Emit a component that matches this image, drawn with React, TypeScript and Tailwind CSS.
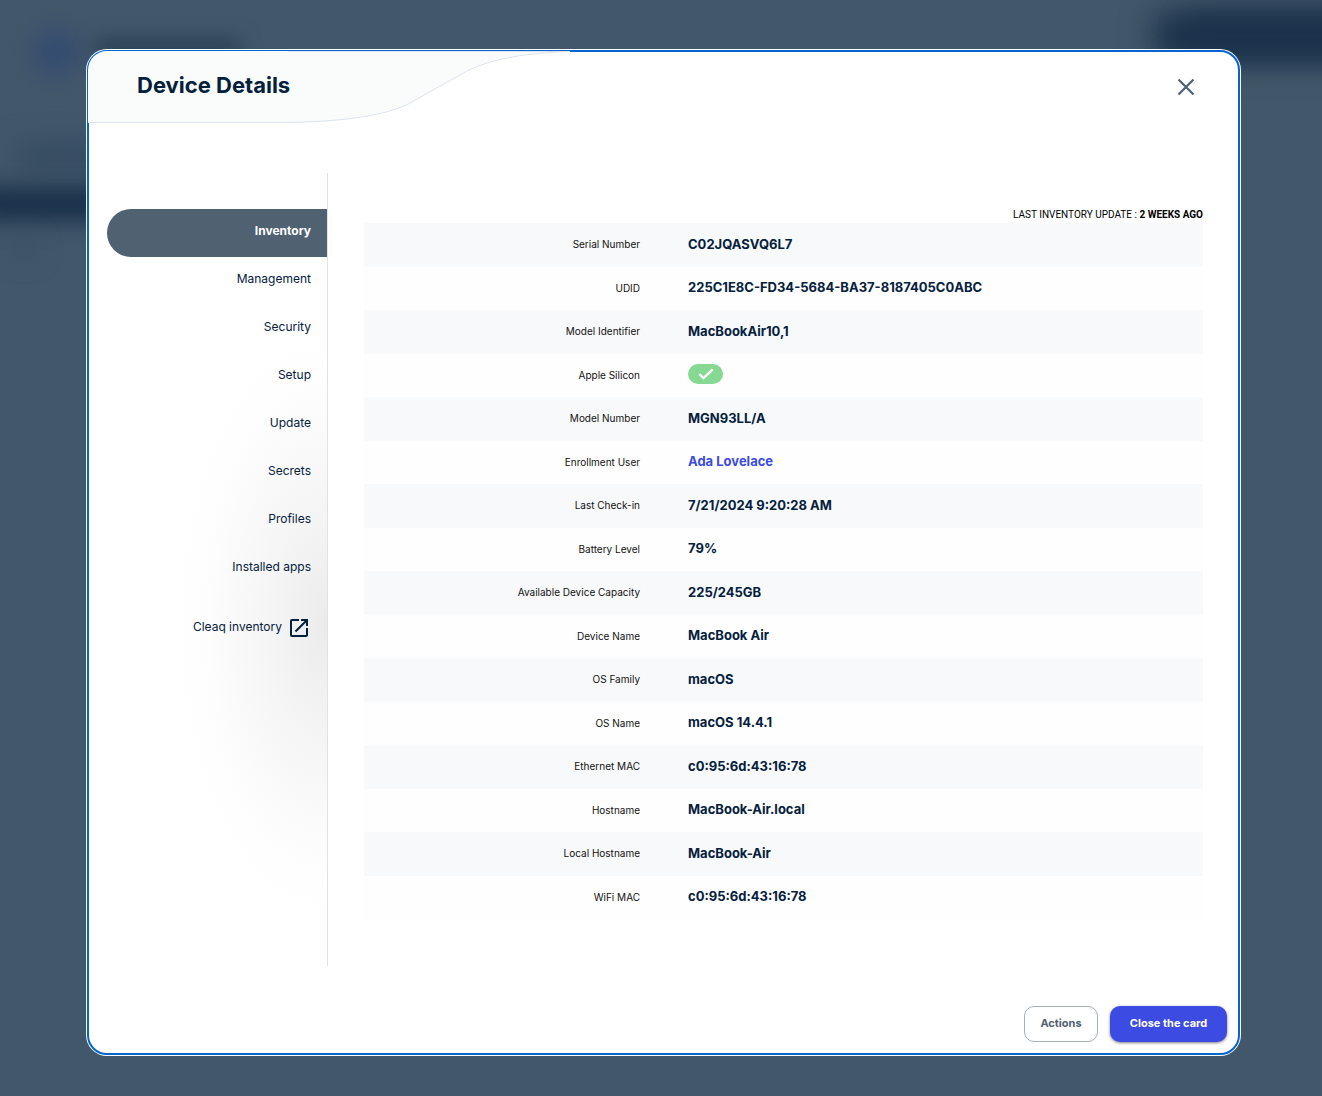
import { useState } from "react";

const tabs = ["Inventory", "Management", "Security", "Setup", "Update", "Secrets", "Profiles", "Installed apps"];

const rows: [string, string][] = [
  ["Serial Number", "C02JQASVQ6L7"],
  ["UDID", "225C1E8C-FD34-5684-BA37-8187405C0ABC"],
  ["Model Identifier", "MacBookAir10,1"],
  ["Apple Silicon", ""],
  ["Model Number", "MGN93LL/A"],
  ["Enrollment User", "Ada Lovelace"],
  ["Last Check-in", "7/21/2024 9:20:28 AM"],
  ["Battery Level", "79%"],
  ["Available Device Capacity", "225/245GB"],
  ["Device Name", "MacBook Air"],
  ["OS Family", "macOS"],
  ["OS Name", "macOS 14.4.1"],
  ["Ethernet MAC", "c0:95:6d:43:16:78"],
  ["Hostname", "MacBook-Air.local"],
  ["Local Hostname", "MacBook-Air"],
  ["WiFi MAC", "c0:95:6d:43:16:78"],
];

function Backdrop() {
  return (
    <div aria-hidden="true" className="absolute inset-0 overflow-hidden">
      <div className="absolute -right-10 top-3 h-12 w-52 rounded-xl bg-[#18304a] blur-[16px]" />
      <div className="absolute -right-10 top-4 h-10 w-44 rounded-xl bg-[#1b334c] blur-[12px]" />
      <div className="absolute left-9 top-8 size-10 rotate-45 bg-[#304a72] blur-[14px]" />
      <div className="absolute left-24 top-10 h-4 w-36 bg-[#243b4f] blur-[10px]" />
      <div className="absolute left-4 top-36 h-6 w-40 bg-[#324a60] blur-[14px]" />
      <div className="absolute -left-6 top-[188px] h-8 w-44 bg-[#152d48] blur-[12px]" />
      <div className="absolute left-3 top-60 h-4 w-6 bg-[#374e63] blur-[12px]" />
    </div>
  );
}

function Value({ label, value }: { label: string; value: string }) {
  if (label === "Apple Silicon") {
    return (
      <span role="img" aria-label="Yes" className="flex h-5 w-[35px] items-center justify-center rounded-full bg-[#86d992] text-white">
        <svg viewBox="0 0 24 24" className="size-5" fill="none" stroke="currentColor" strokeWidth="2.8">
          <path d="M4.2 12.2 9 17 20 6.4" />
        </svg>
      </span>
    );
  }
  if (label === "Enrollment User") {
    return <a href="#user" className="text-[#3c4be2]">{value}</a>;
  }
  return <>{value}</>;
}

export default function App() {
  const [tab, setTab] = useState("Inventory");
  return (
    <div className="relative min-h-screen bg-[#43576a] pt-[50px] pr-[82px] pb-[41px] pl-[87px] font-['Inter',sans-serif] text-[#04203c]">
      <Backdrop />
      <div role="dialog" aria-labelledby="title" className="relative rounded-[20px] border-2 border-[#0464d2] bg-white shadow-[0_0_0_1px_white]">
        <header className="relative flex h-[71px] items-center justify-between pr-10 pl-12">
          <svg aria-hidden="true" className="absolute -top-px -left-px h-[73px] w-[484px]" viewBox="0 0 484 73">
            <path d="M0 71.5V19A19 19 0 0 1 19 0H482C440 2 400 7 372 24L329 48C308 62 270 70 200 71.5Z" fill="#fafcfb" />
            <path d="M0 71.5H200C270 70 308 62 329 48L372 24C400 7 440 2 482 .5H200" fill="none" stroke="#dde4ee" />
          </svg>
          <h2 id="title" className="relative pb-1.5 text-[22px] leading-7 font-bold">Device Details</h2>
          <button type="button" aria-label="Close" className="pb-0.5 text-[#4f6174]">
            <svg viewBox="0 0 24 24" className="size-6" fill="none" stroke="currentColor" strokeWidth="2.2">
              <path d="M4.5 4.5l15 15M19.5 4.5l-15 15" />
            </svg>
          </button>
        </header>
        <div className="mt-[50px] flex">
          <nav className="flex w-[239px] shrink-0 flex-col border-r border-[#dde3ea] bg-[radial-gradient(ellipse_150px_290px_at_100%_57%,#ebebeb_0%,#f5f5f5_40%,#fdfdfd_80%,#ffffff_100%)] pt-9 pl-[18px] text-[12px]">
            {tabs.map((t) => (
              <button
                key={t}
                type="button"
                onClick={() => setTab(t)}
                className={
                  t === tab
                    ? "h-12 rounded-l-full bg-[#506172] pr-4 pb-1 text-right font-bold text-white"
                    : "h-12 pr-4 pb-1 text-right"
                }
              >
                {t}
              </button>
            ))}
            <a href="#cleaq" className="mt-[11px] flex h-12 items-center justify-end gap-[5px] pr-4">
              <span className="pb-0.5">Cleaq inventory</span>
              <svg viewBox="0 0 24 24" className="size-6" fill="currentColor">
                <path d="M19 19H5V5h7V3H5a2 2 0 0 0-2 2v14a2 2 0 0 0 2 2h14c1.1 0 2-.9 2-2v-7h-2v7zM14 3v2h3.59l-9.83 9.83 1.41 1.41L19 6.41V10h2V3h-7z" />
              </svg>
            </a>
          </nav>
          <main className="flex min-w-0 flex-1 flex-col pt-[34px] pr-[35px] pb-[47px] pl-9">
            <p className="text-right font-['Roboto',sans-serif] text-[10px] leading-4 text-black uppercase">
              Last inventory update : <strong>2 weeks ago</strong>
            </p>
            <table className="h-[696px] w-full table-fixed border-collapse">
              <tbody>
                {rows.map(([label, value]) => (
                  <tr key={label} className="odd:bg-[#f8f9fb] even:bg-[#fefefe]">
                    <th scope="row" className="w-[276px] text-right text-[10px] font-normal text-[#111]">{label}</th>
                    <td className="pb-0.5 pl-12 text-[13px] leading-5 font-bold">
                      <Value label={label} value={value} />
                    </td>
                  </tr>
                ))}
              </tbody>
            </table>
          </main>
        </div>
        <footer className="flex justify-end gap-3 pt-10 pr-[11px] pb-[11px] text-[11px] font-bold">
          <button type="button" className="h-9 w-[74px] rounded-[10px] border border-[#a7b0b9] pb-0.5 text-[#4f6174]">Actions</button>
          <button type="button" className="h-9 w-[117px] rounded-[10px] bg-[#3c4be2] pb-0.5 text-white shadow-[0_1px_3px_rgba(0,0,0,0.5)]">Close the card</button>
        </footer>
      </div>
    </div>
  );
}
